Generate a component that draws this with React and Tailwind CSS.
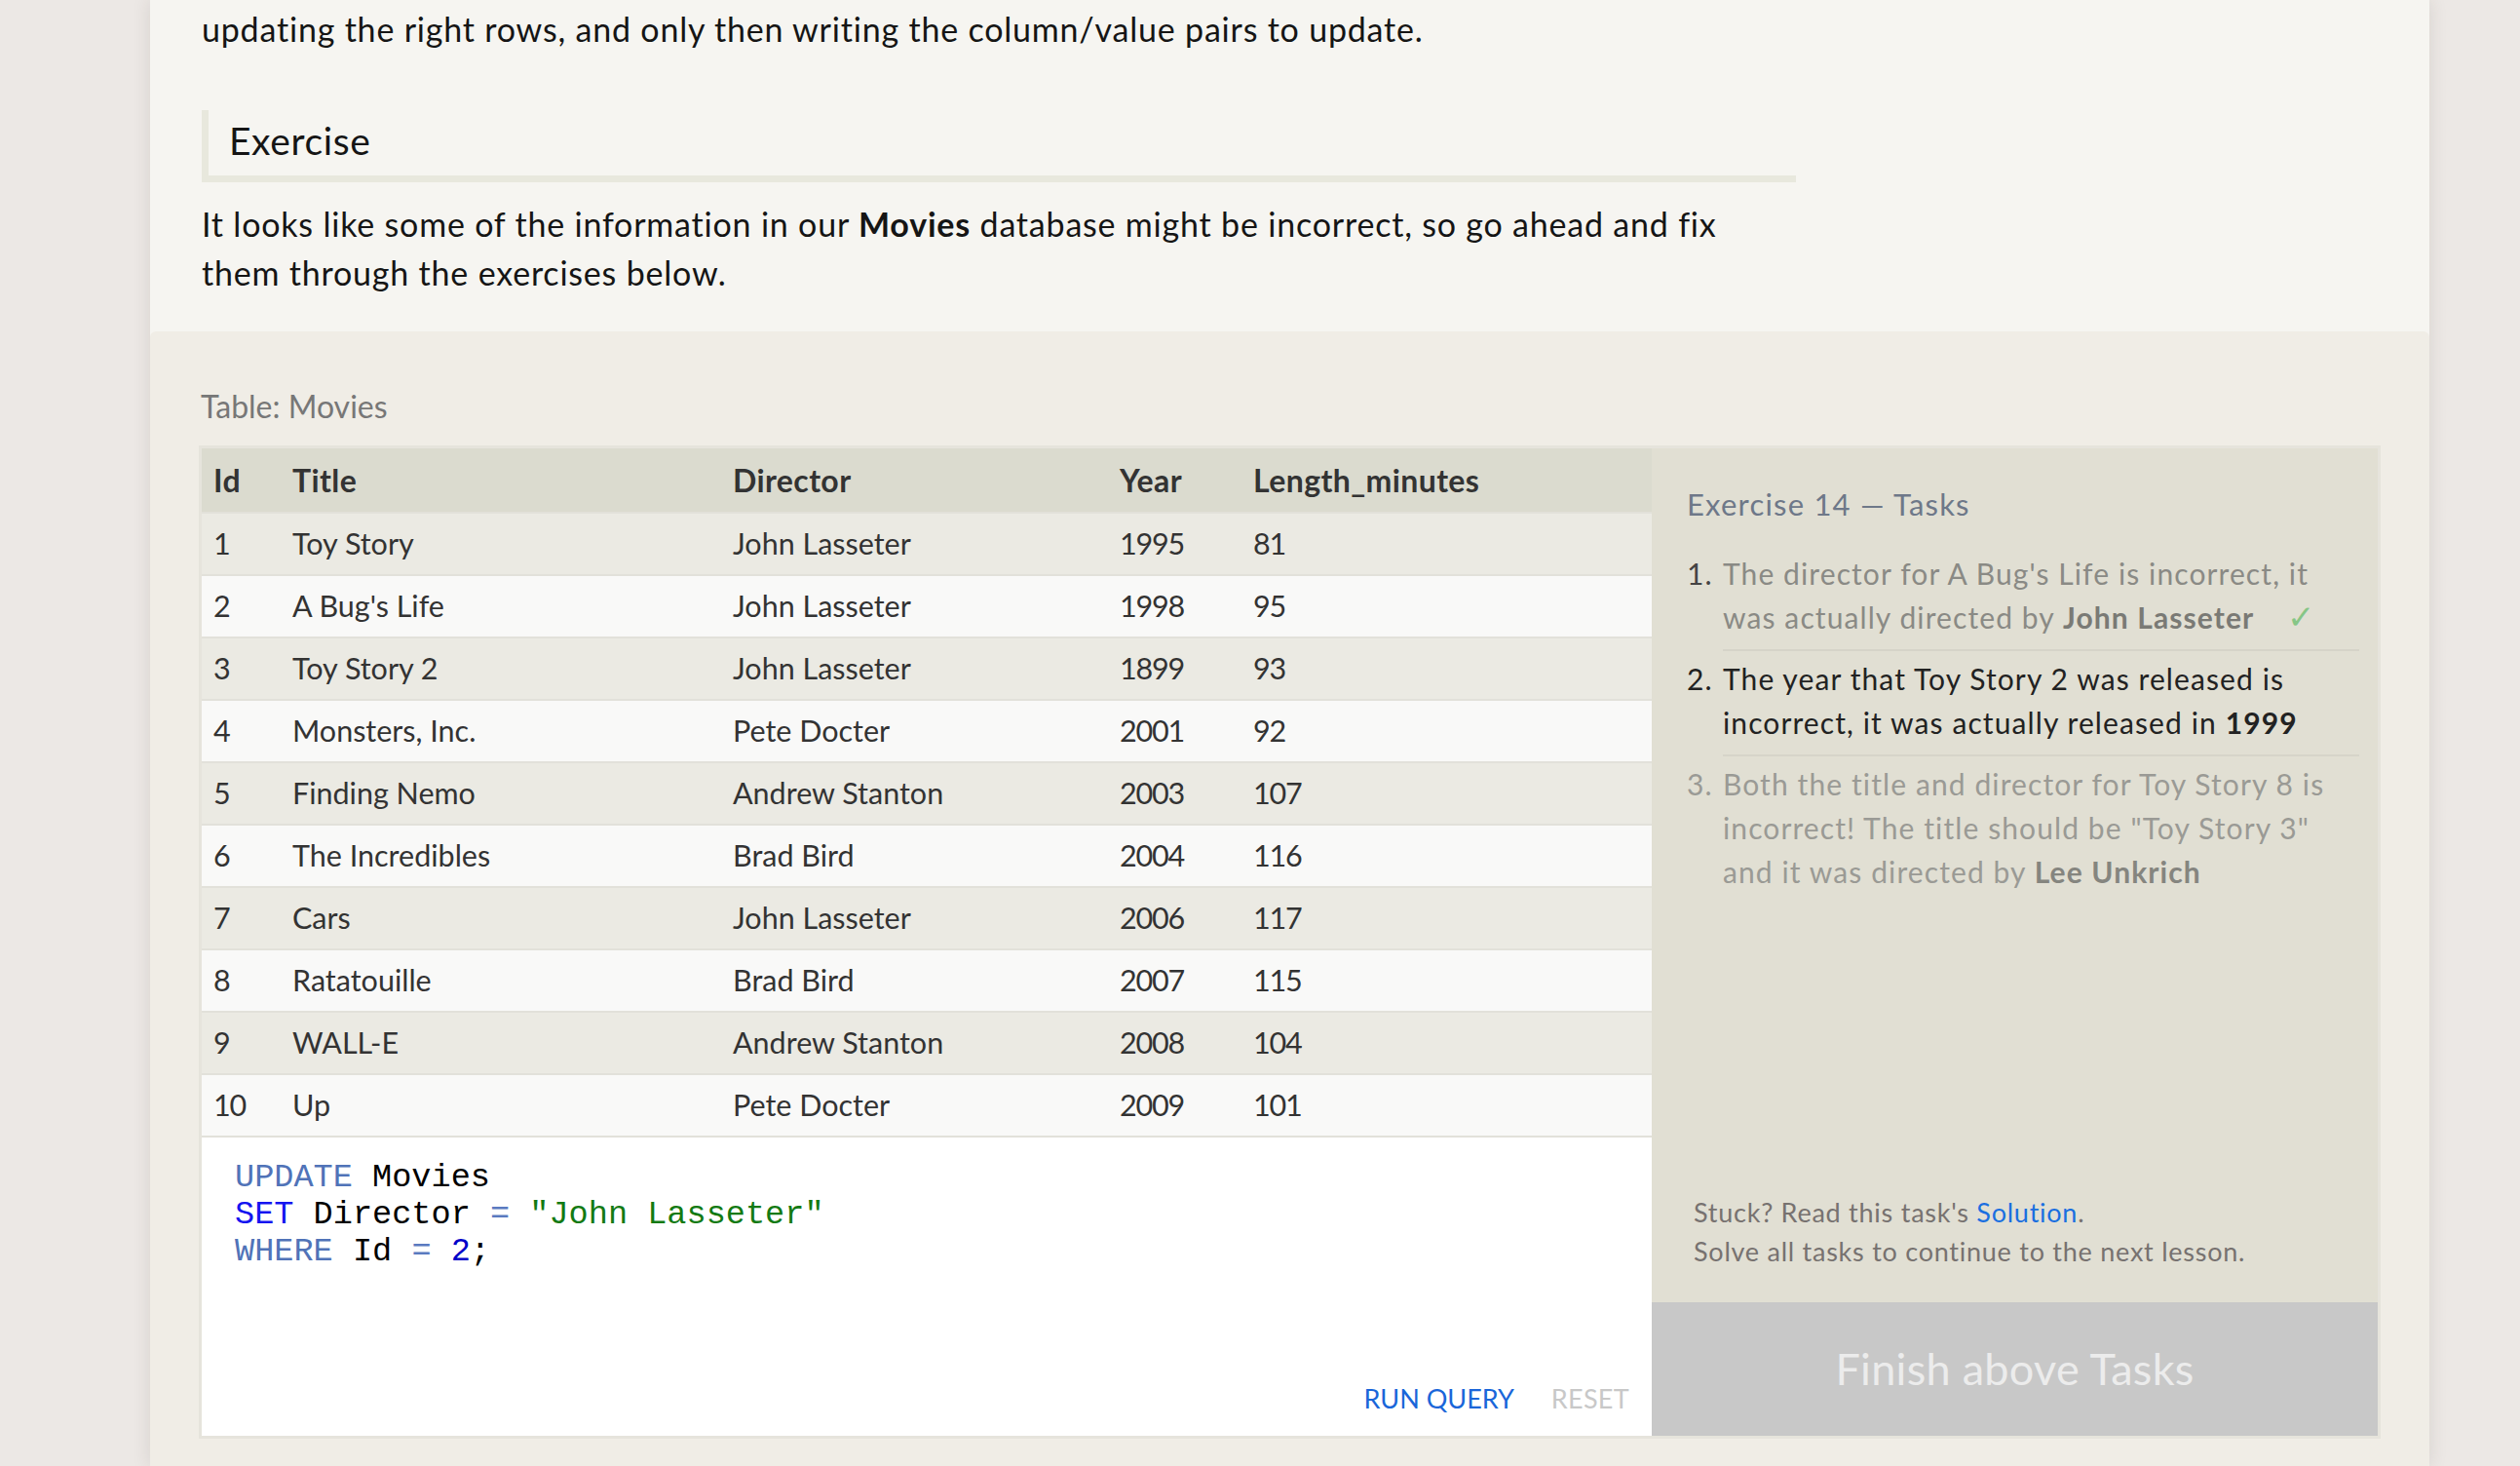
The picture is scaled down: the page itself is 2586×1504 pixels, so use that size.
import React from 'react';

const movies = [
    [1, 'Toy Story', 'John Lasseter', 1995, 81],
    [2, "A Bug's Life", 'John Lasseter', 1998, 95],
    [3, 'Toy Story 2', 'John Lasseter', 1899, 93],
    [4, 'Monsters, Inc.', 'Pete Docter', 2001, 92],
    [5, 'Finding Nemo', 'Andrew Stanton', 2003, 107],
    [6, 'The Incredibles', 'Brad Bird', 2004, 116],
    [7, 'Cars', 'John Lasseter', 2006, 117],
    [8, 'Ratatouille', 'Brad Bird', 2007, 115],
    [9, 'WALL-E', 'Andrew Stanton', 2008, 104],
    [10, 'Up', 'Pete Docter', 2009, 101],
];

const cols = 'grid grid-cols-[81px_452px_397px_137px_421px]';

const MoviesTable = () => {
    return (
        <div className="text-[#333]">
            {/* Header */}
            <div className={`${cols} h-[67px] items-center bg-[#dbdbcf] border-b-2 border-[#e2e1da] text-[32px] font-bold tracking-[0.4px]`}>
                <div className="pl-3">Id</div>
                <div className="pl-3">Title</div>
                <div className="pl-3">Director</div>
                <div className="pl-3">Year</div>
                <div className="pl-3">Length_minutes</div>
            </div>
            {movies.map((m, i) => (
                <div
                    key={m[0]}
                    className={`${cols} h-[64px] items-center border-b-2 border-[#e2e1da] text-[30.5px] ${i % 2 === 0 ? 'bg-[#ebeae3]' : 'bg-[#f9f9f8]'}`}
                >
                    {m.map((v, j) => (
                        <div key={j} className={typeof v === 'number' ? 'pl-3 tracking-[-1.2px]' : 'pl-3'}>{v}</div>
                    ))}
                </div>
            ))}
        </div>
    );
};

const Editor = () => {
    return (
        <div className="bg-white h-[306px] flex flex-col">
            <pre className="pl-[34px] pt-[22px] font-['Liberation_Mono',monospace] text-[33.6px] leading-[38px] text-black">
                <span className="text-[#5073b8]">UPDATE</span> Movies{'\n'}
                <span className="text-[#1414f0]">SET</span> Director <span className="text-[#5a7ac0]">=</span> <span className="text-[#137a13]">"John Lasseter"</span>{'\n'}
                <span className="text-[#5073b8]">WHERE</span> Id <span className="text-[#5a7ac0]">=</span> <span className="text-[#0000c8]">2</span>;
            </pre>
            <div className="mt-auto flex justify-end gap-[38px] pr-[23px] pb-[21px] text-[27px] leading-[34px]">
                <span className="text-[#1a66d9]">RUN QUERY</span>
                <span className="text-[#c8c8c8] tracking-[0.3px]">RESET</span>
            </div>
        </div>
    );
};

const TasksPanel = () => {
    return (
        <div className="flex flex-col bg-[#e1dfd3]">
            <div className="pl-[36px] pr-[19px] pt-[38px]">
                <h3 className="text-[31px] leading-[38px] tracking-[1.2px] text-[#6e7889]">Exercise 14 — Tasks</h3>
                <ol className="mt-[30px] text-[30px] leading-[45px] tracking-[1.1px]">
                    <li className="flex">
                        <span className="w-[37px] text-[#444]">1.</span>
                        <div className="flex-1 pb-[10px] border-b-2 border-[#d6d4c9] text-[#8a8a85]">
                            The director for A Bug's Life is incorrect, it<br />
                            was actually directed by <b className="text-[#7a7a75]">John Lasseter</b>
                            <span className="ml-[34px] text-[34px] leading-[40px] text-[#86c686]">✓</span>
                        </div>
                    </li>
                    <li className="flex">
                        <span className="w-[37px] pt-[6px] text-[#222]">2.</span>
                        <div className="flex-1 pt-[6px] pb-[10px] border-b-2 border-[#d6d4c9] text-[#222]">
                            The year that Toy Story 2 was released is<br />
                            incorrect, it was actually released in <b>1999</b>
                        </div>
                    </li>
                    <li className="flex">
                        <span className="w-[37px] pt-[6px] text-[#9a9a95]">3.</span>
                        <div className="flex-1 pt-[6px] text-[#9a9a95]">
                            Both the title and director for Toy Story 8 is<br />
                            incorrect! The title should be "Toy Story 3"<br />
                            and it was directed by <b className="text-[#85857f]">Lee Unkrich</b>
                        </div>
                    </li>
                </ol>
            </div>
            <div className="mt-auto pl-[43px] pb-[32px] text-[27px] leading-[40px] tracking-[0.75px] text-[#777270]">
                <p>Stuck? Read this task's <span className="text-[#1a6fe0]">Solution</span>.</p>
                <p>Solve all tasks to continue to the next lesson.</p>
            </div>
            <div className="h-[137px] bg-[#c8c8c8] flex items-center justify-center text-[45px] tracking-[0.3px] text-[#ececec]">
                Finish above Tasks
            </div>
        </div>
    );
};

const App = () => {
    return (
        <div className="h-[1504px] w-full overflow-hidden bg-[#ece8e5] font-['Lato',sans-serif]">
            <div className="ml-[154px] w-[2339px] h-full bg-[#f6f5f1] shadow-[0_0_18px_rgba(60,40,30,0.12)] flex flex-col">
                {/* Lesson text */}
                <div className="pl-[53px] pt-[5px] pb-[35px] text-[34px] leading-[50px] tracking-[0.8px] text-[#151515]">
                    <p>updating the right rows, and only then writing the column/value pairs to update.</p>

                    <div className="mt-[58px] w-[1636px] border-l-[7px] border-b-[7px] border-[#e8e8dd] pl-[21px] pt-[7px] pb-[12px]">
                        <h2 className="text-[39px] leading-[48px] tracking-[0.6px]">Exercise</h2>
                    </div>

                    <p className="mt-[18px] max-w-[1700px]">
                        It looks like some of the information in our <b>Movies</b> database might be incorrect, so go ahead and fix<br />
                        them through the exercises below.
                    </p>
                </div>

                {/* Exercise widget */}
                <div className="flex-1 bg-[#f0ede6] rounded-t-[6px] px-[50px] pt-[57px]">
                    <div className="pl-[2px] text-[32px] leading-[40px] text-[#777]">Table: Movies</div>
                    <div className="mt-[20px] border-[3px] border-[#e6e4dc] grid grid-cols-[1488px_1fr]">
                        <div className="flex flex-col">
                            <MoviesTable />
                            <Editor />
                        </div>
                        <TasksPanel />
                    </div>
                </div>
            </div>
        </div>
    );
};

export default App;
